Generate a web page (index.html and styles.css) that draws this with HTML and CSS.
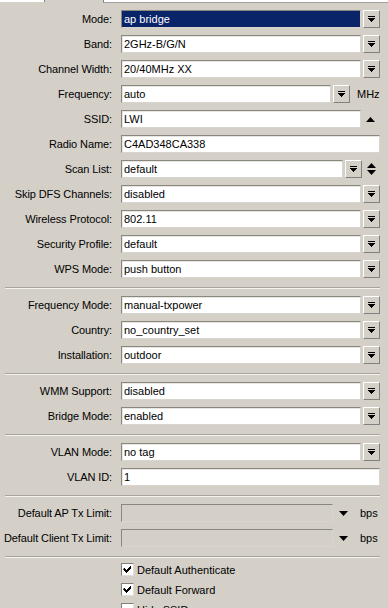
FILE: index.html
```html
<!DOCTYPE html>
<html>
<head>
<meta charset="utf-8">
<link rel="stylesheet" href="styles.css">
</head>
<body>
<div class="tabs">
  <div class="tab-line left"></div>
  <div class="tab-gap"></div>
  <div class="tab-line right"></div>
</div>
<div class="form">
  <div class="row"><label class="lbl">Mode:</label><div class="ctl"><div class="field sel">ap bridge</div><div class="btn"><svg width="7" height="7" viewBox="0 0 7 7"><rect x="0" y="0" width="7" height="1"/><path d="M0 2h7v1h-1v1h-1v1h-1v1h-1v-1h-1v-1h-1v-1h-1z"/></svg></div></div></div>
  <div class="row"><label class="lbl">Band:</label><div class="ctl"><div class="field">2GHz-B/G/N</div><div class="btn"><svg width="7" height="7" viewBox="0 0 7 7"><rect x="0" y="0" width="7" height="1"/><path d="M0 2h7v1h-1v1h-1v1h-1v1h-1v-1h-1v-1h-1v-1h-1z"/></svg></div></div></div>
  <div class="row"><label class="lbl">Channel Width:</label><div class="ctl"><div class="field">20/40MHz XX</div><div class="btn"><svg width="7" height="7" viewBox="0 0 7 7"><rect x="0" y="0" width="7" height="1"/><path d="M0 2h7v1h-1v1h-1v1h-1v1h-1v-1h-1v-1h-1v-1h-1z"/></svg></div></div></div>
  <div class="row"><label class="lbl">Frequency:</label><div class="ctl"><div class="field">auto</div><div class="btn"><svg width="7" height="7" viewBox="0 0 7 7"><rect x="0" y="0" width="7" height="1"/><path d="M0 2h7v1h-1v1h-1v1h-1v1h-1v-1h-1v-1h-1v-1h-1z"/></svg></div><span class="unit">MHz</span></div></div>
  <div class="row"><label class="lbl">SSID:</label><div class="ctl"><div class="field">LWI</div><div class="slot"><svg width="9" height="5" viewBox="0 0 9 5"><path d="M0 5L4.5 0L9 5z"/></svg></div></div></div>
  <div class="row"><label class="lbl">Radio Name:</label><div class="ctl"><div class="field">C4AD348CA338</div></div></div>
  <div class="row"><label class="lbl">Scan List:</label><div class="ctl"><div class="field">default</div><div class="btn"><svg width="7" height="7" viewBox="0 0 7 7"><rect x="0" y="0" width="7" height="1"/><path d="M0 2h7v1h-1v1h-1v1h-1v1h-1v-1h-1v-1h-1v-1h-1z"/></svg></div><div class="slot s18"><svg width="9" height="12" viewBox="0 0 9 12"><path d="M0 5L4.5 0L9 5z"/><path d="M0 7L9 7L4.5 12z"/></svg></div></div></div>
  <div class="row"><label class="lbl">Skip DFS Channels:</label><div class="ctl"><div class="field">disabled</div><div class="btn"><svg width="7" height="7" viewBox="0 0 7 7"><rect x="0" y="0" width="7" height="1"/><path d="M0 2h7v1h-1v1h-1v1h-1v1h-1v-1h-1v-1h-1v-1h-1z"/></svg></div></div></div>
  <div class="row"><label class="lbl">Wireless Protocol:</label><div class="ctl"><div class="field">802.11</div><div class="btn"><svg width="7" height="7" viewBox="0 0 7 7"><rect x="0" y="0" width="7" height="1"/><path d="M0 2h7v1h-1v1h-1v1h-1v1h-1v-1h-1v-1h-1v-1h-1z"/></svg></div></div></div>
  <div class="row"><label class="lbl">Security Profile:</label><div class="ctl"><div class="field">default</div><div class="btn"><svg width="7" height="7" viewBox="0 0 7 7"><rect x="0" y="0" width="7" height="1"/><path d="M0 2h7v1h-1v1h-1v1h-1v1h-1v-1h-1v-1h-1v-1h-1z"/></svg></div></div></div>
  <div class="row"><label class="lbl">WPS Mode:</label><div class="ctl"><div class="field">push button</div><div class="btn"><svg width="7" height="7" viewBox="0 0 7 7"><rect x="0" y="0" width="7" height="1"/><path d="M0 2h7v1h-1v1h-1v1h-1v1h-1v-1h-1v-1h-1v-1h-1z"/></svg></div></div></div>

  <div class="sep"></div>

  <div class="row"><label class="lbl">Frequency Mode:</label><div class="ctl"><div class="field">manual-txpower</div><div class="btn"><svg width="7" height="7" viewBox="0 0 7 7"><rect x="0" y="0" width="7" height="1"/><path d="M0 2h7v1h-1v1h-1v1h-1v1h-1v-1h-1v-1h-1v-1h-1z"/></svg></div></div></div>
  <div class="row"><label class="lbl">Country:</label><div class="ctl"><div class="field">no_country_set</div><div class="btn"><svg width="7" height="7" viewBox="0 0 7 7"><rect x="0" y="0" width="7" height="1"/><path d="M0 2h7v1h-1v1h-1v1h-1v1h-1v-1h-1v-1h-1v-1h-1z"/></svg></div></div></div>
  <div class="row"><label class="lbl">Installation:</label><div class="ctl"><div class="field">outdoor</div><div class="btn"><svg width="7" height="7" viewBox="0 0 7 7"><rect x="0" y="0" width="7" height="1"/><path d="M0 2h7v1h-1v1h-1v1h-1v1h-1v-1h-1v-1h-1v-1h-1z"/></svg></div></div></div>

  <div class="sep"></div>

  <div class="row"><label class="lbl">WMM Support:</label><div class="ctl"><div class="field">disabled</div><div class="btn"><svg width="7" height="7" viewBox="0 0 7 7"><rect x="0" y="0" width="7" height="1"/><path d="M0 2h7v1h-1v1h-1v1h-1v1h-1v-1h-1v-1h-1v-1h-1z"/></svg></div></div></div>
  <div class="row"><label class="lbl">Bridge Mode:</label><div class="ctl"><div class="field">enabled</div><div class="btn"><svg width="7" height="7" viewBox="0 0 7 7"><rect x="0" y="0" width="7" height="1"/><path d="M0 2h7v1h-1v1h-1v1h-1v1h-1v-1h-1v-1h-1v-1h-1z"/></svg></div></div></div>

  <div class="sep"></div>

  <div class="row"><label class="lbl">VLAN Mode:</label><div class="ctl"><div class="field">no tag</div><div class="btn"><svg width="7" height="7" viewBox="0 0 7 7"><rect x="0" y="0" width="7" height="1"/><path d="M0 2h7v1h-1v1h-1v1h-1v1h-1v-1h-1v-1h-1v-1h-1z"/></svg></div></div></div>
  <div class="row"><label class="lbl">VLAN ID:</label><div class="ctl"><div class="field">1</div></div></div>

  <div class="sep"></div>

  <div class="row"><label class="lbl">Default AP Tx Limit:</label><div class="ctl"><div class="field dis"></div><div class="slot s20"><svg width="9" height="5" viewBox="0 0 9 5"><path d="M0 0L9 0L4.5 5z"/></svg></div><span class="unit u27">bps</span></div></div>
  <div class="row"><label class="lbl">Default Client Tx Limit:</label><div class="ctl"><div class="field dis"></div><div class="slot s20"><svg width="9" height="5" viewBox="0 0 9 5"><path d="M0 0L9 0L4.5 5z"/></svg></div><span class="unit u27">bps</span></div></div>

  <div class="sep"></div>

  <div class="checks">
    <div class="chk"><span class="box"><svg width="11" height="11" viewBox="0 0 11 11"><path d="M2 4h1v1h1v1h1v-1h1v-1h1v-1h1v-1h1v3h-1v1h-1v1h-1v1h-1v1h-1v-1h-1v-1h-1v-1h-1z"/></svg></span>Default Authenticate</div>
    <div class="chk"><span class="box"><svg width="11" height="11" viewBox="0 0 11 11"><path d="M2 4h1v1h1v1h1v-1h1v-1h1v-1h1v-1h1v3h-1v1h-1v1h-1v1h-1v1h-1v-1h-1v-1h-1v-1h-1z"/></svg></span>Default Forward</div>
    <div class="chk"><span class="box"></span>Hide SSID</div>
  </div>
</div>
</body>
</html>
```
FILE: styles.css
```css
* { box-sizing: border-box; }
html, body {
  margin: 0;
  padding: 0;
  background: #d4d0c8;
  font-family: "Liberation Sans", Arial, sans-serif;
  font-size: 11px;
  color: #000;
  overflow: hidden;
}
.tabs {
  display: flex;
  height: 3px;
}
.tab-line {
  height: 2px;
}
.tab-line.left {
  width: 45px;
  background: #fff;
  border-right: 1px solid #808080;
}
.tab-gap {
  width: 58px;
}
.tab-line.right {
  flex: 1;
  background: #fff;
  border-left: 1px solid #808080;
  border-bottom: 1px solid #a0a0a0;
  height: 3px;
}
.form {
  padding-top: 7px;
  display: flex;
  flex-direction: column;
  gap: 7px;
}
.row {
  display: grid;
  grid-template-columns: 112px 1fr;
  column-gap: 9px;
  height: 18px;
  align-items: center;
  padding-right: 8px;
}
.lbl {
  text-align: right;
  white-space: nowrap;
  letter-spacing: -0.1px;
}
.ctl {
  display: flex;
  align-items: center;
  height: 18px;
}
.field {
  flex: 1;
  height: 18px;
  background: #fff;
  border: 1px solid;
  border-color: #8a877f #d8d5cf #d8d5cf #8a877f;
  box-shadow: inset 1px 1px 0 #e8e6e0;
  padding: 0 2px;
  line-height: 16px;
  white-space: nowrap;
  overflow: hidden;
}
.field.sel {
  background: #0a246a;
  color: #fff;
  box-shadow: none;
}
.field.dis {
  background: #d4d0c8;
  box-shadow: none;
}
.btn {
  width: 17px;
  height: 18px;
  margin-left: 2px;
  border: 1px solid;
  border-color: #fff #808080 #808080 #fff;
  background: #d4d0c8;
  display: flex;
  align-items: center;
  justify-content: center;
}
.btn svg { display: block; }
.slot {
  width: 19px;
  height: 18px;
  display: flex;
  align-items: center;
  justify-content: center;
}
.slot.s18 { width: 18px; }
.slot.s20 { width: 20px; }
.unit {
  width: 30px;
  padding-left: 7px;
  white-space: nowrap;
}
.unit.u27 { width: 27px; }
.sep {
  height: 2px;
  margin: 2px 8px 0 5px;
  border-top: 1px solid #a8a49c;
  border-bottom: 1px solid #f4f3f0;
}
.checks {
  display: flex;
  flex-direction: column;
  gap: 7px;
  padding-left: 121px;
  margin-top: -2px;
}
.chk {
  display: flex;
  align-items: center;
  height: 13px;
  white-space: nowrap;
}
.box {
  width: 13px;
  height: 13px;
  background: #fff;
  border: 1px solid;
  border-color: #808080 #e0ded8 #e0ded8 #808080;
  margin-right: 3px;
  display: flex;
  align-items: center;
  justify-content: center;
}
.box svg { display: block; }
```
